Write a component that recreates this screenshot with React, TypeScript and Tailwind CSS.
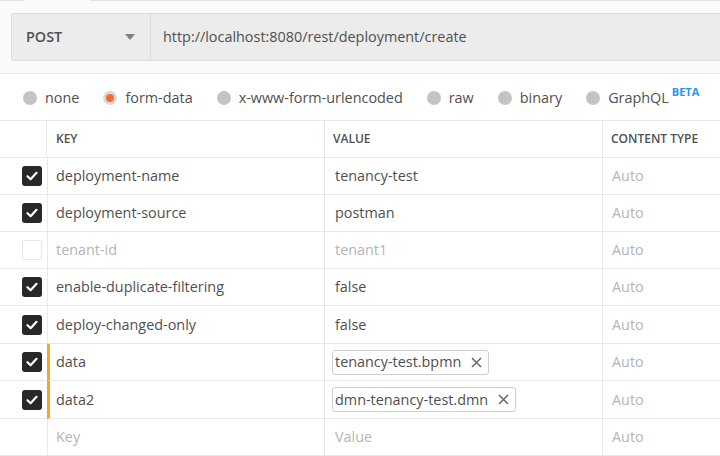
import { Fragment } from "react";

type Row = {
    key: string;
    value: string;
    checked: boolean;
    file?: boolean;
    disabled?: boolean;
    placeholder?: boolean;
    tall?: boolean;
};

const rows: Row[] = [
    { key: "deployment-name", value: "tenancy-test", checked: true },
    { key: "deployment-source", value: "postman", checked: true },
    { key: "tenant-id", value: "tenant1", checked: false, disabled: true },
    { key: "enable-duplicate-filtering", value: "false", checked: true },
    { key: "deploy-changed-only", value: "false", checked: true, tall: true },
    { key: "data", value: "tenancy-test.bpmn", checked: true, file: true },
    { key: "data2", value: "dmn-tenancy-test.dmn", checked: true, file: true, tall: true },
    { key: "Key", value: "Value", checked: false, placeholder: true },
];

const bodyTypes = ["none", "form-data", "x-www-form-urlencoded", "raw", "binary", "GraphQL"];

function Checkbox({ checked }: { checked: boolean }) {
    if (!checked) {
        return <div className="w-[20px] h-[20px] rounded-[3px] border border-[#e6e6e6] bg-white" />;
    }
    return (
        <div className="w-[20px] h-[20px] rounded-[3px] bg-[#282828] flex items-center justify-center">
            <svg width="12" height="10" viewBox="0 0 12 10">
                <path d="M1.5 5.2 L4.6 8.2 L10.5 1.8" fill="none" stroke="white" strokeWidth="2.2" strokeLinecap="round" strokeLinejoin="round" />
            </svg>
        </div>
    );
}

function Radio({ selected }: { selected: boolean }) {
    if (selected) {
        return (
            <div className="w-[14px] h-[14px] rounded-full bg-[#d9d9d9] flex items-center justify-center">
                <div className="w-[8px] h-[8px] rounded-full bg-[#f26b3a]" />
            </div>
        );
    }
    return <div className="w-[14px] h-[14px] rounded-full bg-[#c4c4c4]" />;
}

export default function App() {
    return (
        <div className="w-[720px] h-[456px] overflow-hidden bg-white text-[#505050] text-[14.4px]" style={{ fontFamily: '"Open Sans", sans-serif' }}>
            {/* request bar */}
            <div className="bg-[#fafafa] h-[74px] border-b border-[#e8e8e8] pt-[13px] pl-[11px] relative">
                <div className="absolute top-0 left-0 w-[25px] h-px bg-[#e3e3e3]" />
                <div className="absolute top-0 left-[90px] right-0 h-px bg-[#e3e3e3]" />
                <div className="flex h-[48px] bg-[#ececec] border border-[#dcdcdc] rounded-l-[3px] border-r-0">
                    <div className="w-[139px] flex items-center justify-between pl-[14px] pr-[15px] border-r border-[#dcdcdc]">
                        <span className="font-semibold text-[#505050]">POST</span>
                        <svg width="10" height="6" viewBox="0 0 10 6">
                            <path d="M0 0 H10 L5 6 Z" fill="#808080" />
                        </svg>
                    </div>
                    <div className="flex items-center pl-[12px] text-[#505050]">http://localhost:8080/rest/deployment/create</div>
                </div>
            </div>

            {/* body type radios */}
            <div className="h-[46px] flex items-center pl-[23px] pt-[2px] gap-[24px]">
                {bodyTypes.map((t) => (
                    <div key={t} className="flex items-center gap-[8px]">
                        <Radio selected={t === "form-data"} />
                        <span className="leading-none">{t}</span>
                        {t === "GraphQL" && (
                            <span className="text-[11px] font-bold text-[#2196f3] -ml-[5px] -mt-[14px] leading-none">BETA</span>
                        )}
                    </div>
                ))}
            </div>

            {/* params table */}
            <div className="border-t border-[#e8e8e8] grid grid-cols-[47px_278px_278px_1fr]">
                <div className="h-[37px] border-b border-r border-[#e8e8e8]" />
                <div className="h-[37px] border-b border-r border-[#e8e8e8] flex items-center pl-[9px] text-[12px] font-semibold">KEY</div>
                <div className="h-[37px] border-b border-r border-[#e8e8e8] flex items-center pl-[8px] text-[12px] font-semibold">VALUE</div>
                <div className="h-[37px] border-b border-[#e8e8e8] flex items-center pl-[8px] text-[12px] font-semibold">CONTENT TYPE</div>

                {rows.map((r) => {
                    const muted = r.disabled || r.placeholder;
                    const h = r.tall ? "h-[38px]" : "h-[37px]";
                    return (
                        <Fragment key={r.key}>
                            <div className={`${h} border-b border-[#e8e8e8] flex items-center justify-end pr-[5px]`}>
                                {!r.placeholder && <Checkbox checked={r.checked} />}
                            </div>
                            <div className={`${h} border-b border-r border-[#e8e8e8] flex items-center ${r.file ? "border-l-[3px] border-l-[#f5a623] pl-[6px]" : "border-l border-l-[#e8e8e8] pl-[8px]"} ${muted ? "text-[#b5b5b5]" : ""}`}>
                                {r.key}
                            </div>
                            <div className={`${h} border-b border-r border-[#e8e8e8] flex items-center ${r.file ? "pl-[7px]" : "pl-[10px]"} ${muted ? "text-[#b5b5b5]" : ""}`}>
                                {r.file ? (
                                    <div className="h-[25px] flex items-center gap-[10px] border border-[#cfcfcf] rounded-[3px] pl-[2px] pr-[6px]">
                                        <span>{r.value}</span>
                                        <svg width="11" height="11" viewBox="0 0 11 11">
                                            <path d="M1 1 L10 10 M10 1 L1 10" stroke="#666" strokeWidth="1.5" />
                                        </svg>
                                    </div>
                                ) : (
                                    r.value
                                )}
                            </div>
                            <div className={`${h} border-b border-[#e8e8e8] flex items-center pl-[9px] text-[#b5b5b5]`}>Auto</div>
                        </Fragment>
                    );
                })}
            </div>
        </div>
    );
}
